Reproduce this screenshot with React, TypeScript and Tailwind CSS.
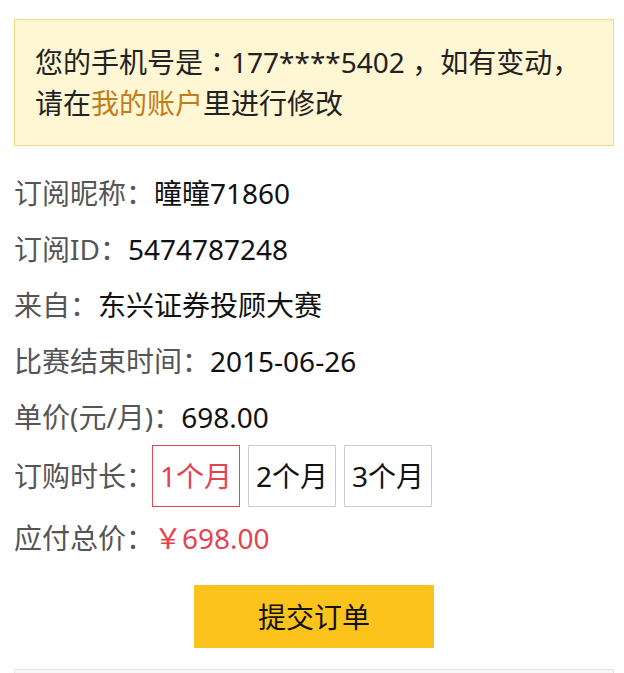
import React, { useState } from 'react';

const rows: { label: string; value: string }[] = [
  { label: '订阅昵称：', value: '曈曈71860' },
  { label: '订阅ID：', value: '5474787248' },
  { label: '来自：', value: '东兴证券投顾大赛' },
  { label: '比赛结束时间：', value: '2015-06-26' },
  { label: '单价(元/月)：', value: '698.00' },
];

const months = [1, 2, 3];

export default function App() {
  const [selected, setSelected] = useState(1);
  const total = (698 * selected).toFixed(2);

  return (
    <div
      className="min-h-screen bg-white pl-[14px] pr-[10px] pt-[19px] text-[28px]"
      style={{ fontFamily: '"Noto Sans", "Noto Sans CJK SC", sans-serif' }}
    >
      {/* Phone notice */}
      <div className="border border-[#f3d97c] bg-[#fff7d4] px-[20px] py-[21px] leading-[41px] text-[#222]">
        <p className="whitespace-nowrap">
          您的手机号是
          <span style={{ fontFamily: '"Noto Sans CJK JP", sans-serif' }}>：</span>
          177****5402 ，如有变动，
        </p>
        <p>
          请在<a className="text-[#c27c1a]">我的账户</a>里进行修改
        </p>
      </div>

      {/* Order info */}
      <div className="mt-[19px]">
        {rows.map((r) => (
          <div key={r.label} className="flex h-[56px] items-center whitespace-nowrap">
            <span className="text-[#555]">{r.label}</span>
            <span className="text-[#111]">{r.value}</span>
          </div>
        ))}

        <div className="flex h-[62px] items-center whitespace-nowrap">
          <span className="w-[138px] shrink-0 text-[#555]">订购时长：</span>
          <div className="flex gap-[8px]">
            {months.map((m) => (
              <button
                key={m}
                onClick={() => setSelected(m)}
                className={
                  m === selected
                    ? 'flex h-[62px] w-[88px] items-center justify-center border border-[#dd4856] text-[#e8404f]'
                    : 'flex h-[62px] w-[88px] items-center justify-center border border-[#cccccc] text-[#111]'
                }
              >
                {m}个月
              </button>
            ))}
          </div>
        </div>

        <div className="mt-[3px] flex h-[56px] items-center whitespace-nowrap">
          <span className="text-[#555]">应付总价：</span>
          <span className="text-[#e8404f]">￥{total}</span>
        </div>
      </div>

      <div className="mt-[19px] flex justify-center">
        <button className="h-[63px] w-[240px] bg-[#fbc31b] text-[#111]">提交订单</button>
      </div>

      <div className="mt-[21px] h-[80px] border border-[#e3e3e3] bg-[#f7f7f7]" />
    </div>
  );
}
